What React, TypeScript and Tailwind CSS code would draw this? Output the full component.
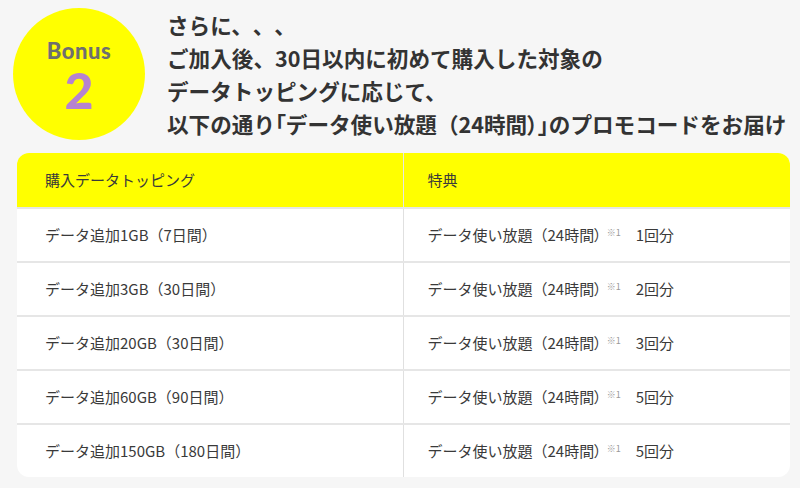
import React from 'react';

const rows = [
  { plan: 'データ追加1GB（7日間）', count: '1回分' },
  { plan: 'データ追加3GB（30日間）', count: '2回分' },
  { plan: 'データ追加20GB（30日間）', count: '3回分' },
  { plan: 'データ追加60GB（90日間）', count: '5回分' },
  { plan: 'データ追加150GB（180日間）', count: '5回分' },
];

export default function App() {
  return (
    <div className="w-[800px] h-[488px] bg-[#f6f6f6] overflow-hidden text-[#333] font-['Noto_Sans_CJK_JP','Noto_Sans',sans-serif]">
      {/* Heading */}
      <div className="flex items-start pl-[13px] pt-2 gap-[22px]">
        <div className="w-[132px] h-[132px] shrink-0 rounded-full bg-[#ffff00] flex flex-col items-center justify-center">
          <span className="text-[22px] leading-none font-black tracking-[0.5px] text-[#6f6f6f] font-['Lato',sans-serif] mt-[6px]">Bonus</span>
          <span className="text-[50px] leading-none font-black text-[#b683cf] font-['Lato',sans-serif] mt-[3px]">2</span>
        </div>
        <div className="text-[21.6px] font-bold leading-[33px]">
          <p className="[text-spacing-trim:space-all]">さらに、、、</p>
          <p>ご加入後、30日以内に初めて購入した対象の</p>
          <p>データトッピングに応じて、</p>
          <p>
            以下の通り<span className="[font-feature-settings:'palt']">「</span>データ使い放題（24時間<span className="[font-feature-settings:'palt']">）」</span>のプロモコードをお届け
          </p>
        </div>
      </div>

      {/* Table */}
      <div className="ml-[17px] mr-[10px] mt-[13px] rounded-xl overflow-hidden bg-white text-[15px] text-[#3a3a3a]">
        <div className="grid grid-cols-2 h-[54px] bg-[#ffff00]">
          <div className="flex items-center pl-[28px] border-r border-[#e6e6e6]">購入データトッピング</div>
          <div className="flex items-center pl-[24px]">特典</div>
        </div>
        {rows.map((row, i) => (
          <div key={i} className="grid grid-cols-2 h-[54px] border-t-2 border-[#e6e6e6]">
            <div className="flex items-center pl-[28px] border-r border-[#e0e0e0]">{row.plan}</div>
            <div className="flex items-center pl-[24px]">
              <span>
                データ使い放題（24時間<span className="[font-feature-settings:'palt']">）</span>
              </span>
              <span className="text-[9px] text-[#999] self-start mt-[17px] ml-[5px]">※1</span>
              <span className="ml-[15px]">{row.count}</span>
            </div>
          </div>
        ))}
      </div>
    </div>
  );
}
